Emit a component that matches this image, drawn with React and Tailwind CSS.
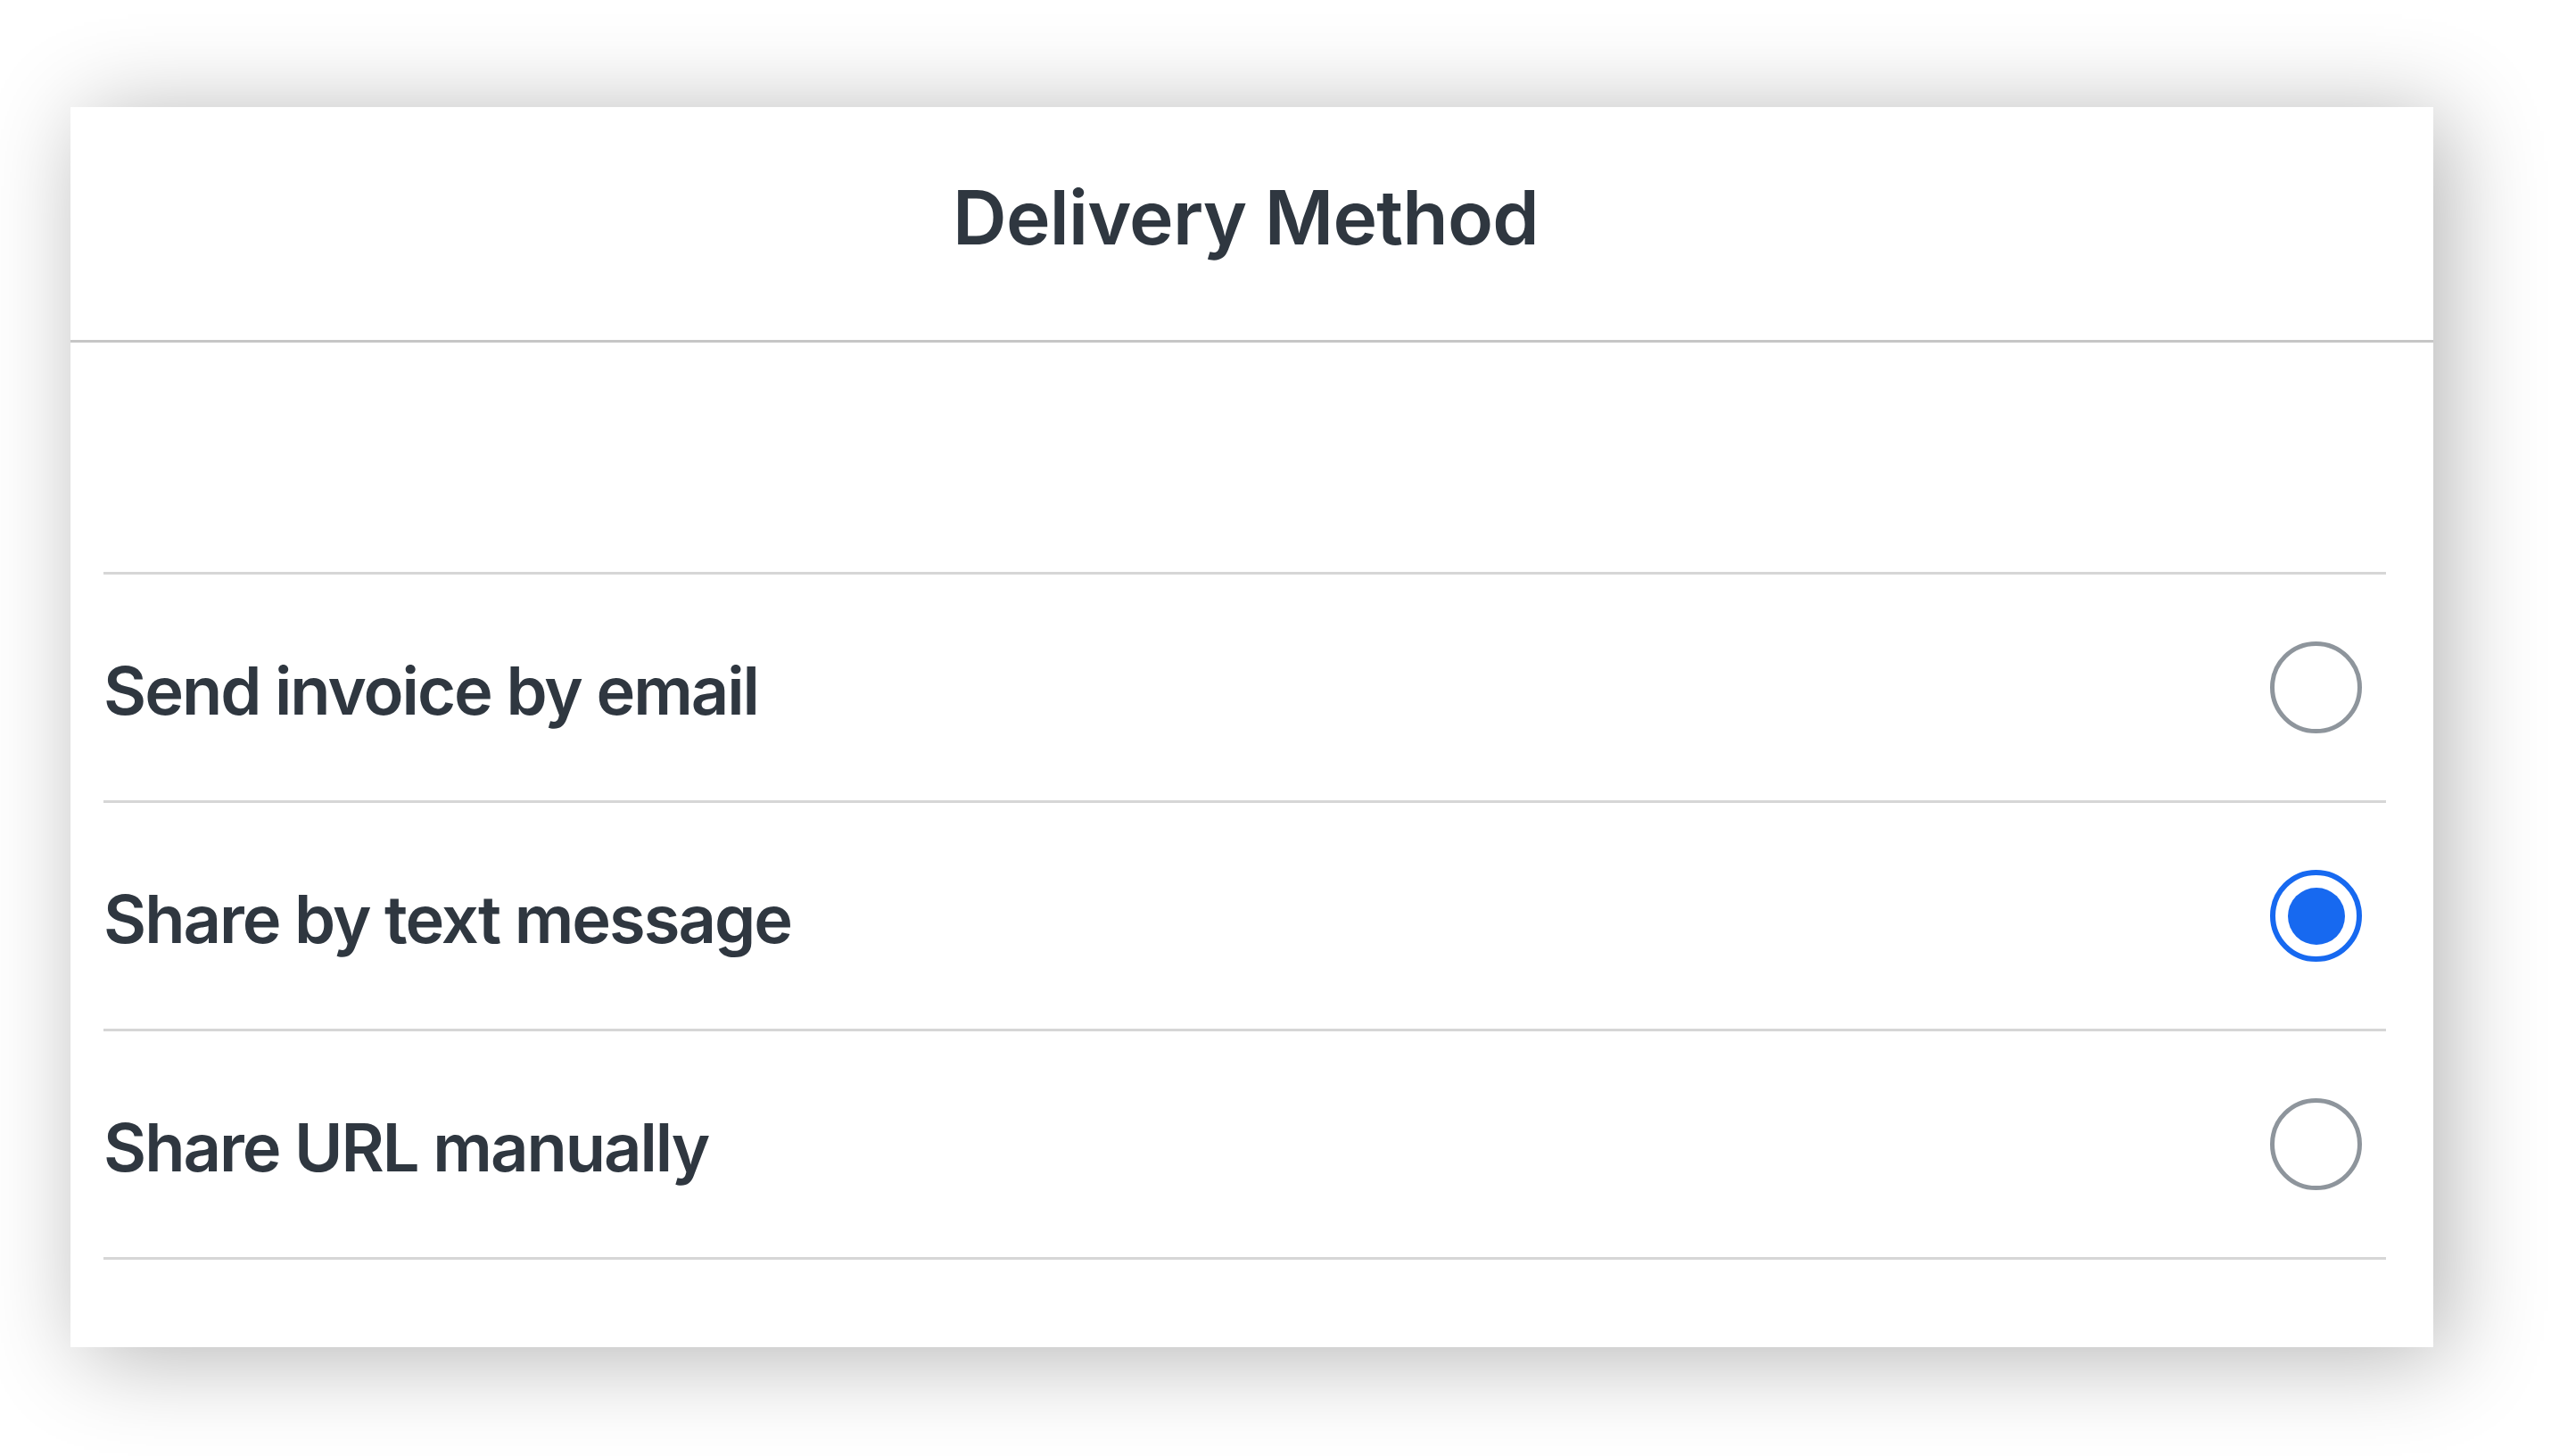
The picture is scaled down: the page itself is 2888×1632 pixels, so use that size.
const options = [
  { label: "Send invoice by email", selected: false },
  { label: "Share by text message", selected: true },
  { label: "Share URL manually", selected: false },
];

function Radio({ selected }) {
  if (selected) {
    return (
      <div className="w-[103px] h-[103px] rounded-full border-[6px] border-[#1769f0] flex items-center justify-center">
        <div className="w-[64px] h-[64px] rounded-full bg-[#1769f0]" />
      </div>
    );
  }
  return <div className="w-[103px] h-[103px] rounded-full border-[5px] border-[#8e959c]" />;
}

export default function App() {
  return (
    <div className="min-h-screen bg-white pt-[120px] pl-[79px] font-['Inter',sans-serif] text-[#2f3740]">
      <div className="w-[2649px] h-[1390px] bg-white shadow-[15px_10px_100px_rgba(0,0,0,0.3)] flex flex-col">
        <div className="h-[264px] shrink-0 border-b-[3px] border-[#c6c6c6] flex items-center justify-center pb-[14px] pr-[14px]">
          <h1 className="text-[84px] font-semibold tracking-[-0.8px]">Delivery Method</h1>
        </div>

        <div className="h-[257px] shrink-0" />

        <div className="ml-[37px] mr-[53px] border-b-[3px] border-[#d6d6d6]">
          {options.map((o) => (
            <div
              key={o.label}
              className="h-[256px] border-t-[3px] border-[#d6d6d6] flex items-center justify-between pr-[27px]"
            >
              <span className="text-[74px] font-semibold tracking-[-2px] pt-[8px]">{o.label}</span>
              <Radio selected={o.selected} />
            </div>
          ))}
        </div>
      </div>
    </div>
  );
}
